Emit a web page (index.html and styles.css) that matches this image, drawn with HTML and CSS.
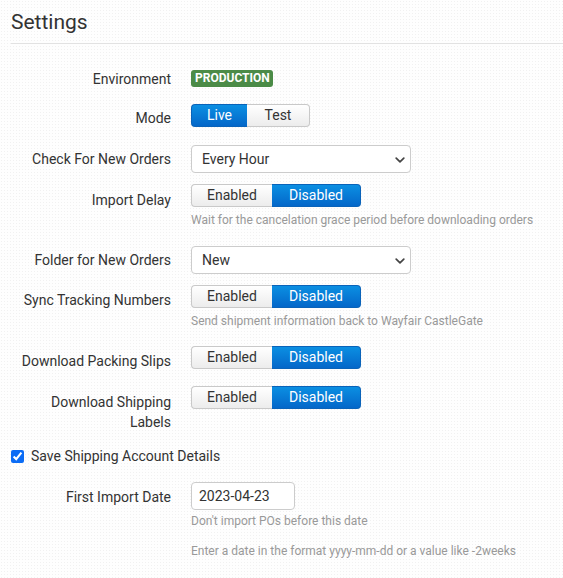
FILE: index.html
```html
<!DOCTYPE html>
<html lang="en">
<head>
<meta charset="utf-8">
<title>Settings</title>
<link rel="stylesheet" href="styles.css">
</head>
<body>
<h1 class="title">Settings</h1>
<form class="form">
  <div class="row row-env">
    <label class="label">Environment</label>
    <div class="control"><span class="badge">PRODUCTION</span></div>
  </div>
  <div class="row row-mode">
    <label class="label pt-4">Mode</label>
    <div class="control">
      <div class="seg">
        <button type="button" class="seg-btn on w-live">Live</button>
        <button type="button" class="seg-btn w-test">Test</button>
      </div>
    </div>
  </div>
  <div class="row row-check">
    <label class="label pt-4">Check For New Orders</label>
    <div class="control">
      <div class="select">
        <span class="select-value">Every Hour</span>
        <svg class="chev" width="10" height="6" viewBox="0 0 10 6"><path d="M1.2 1.2L5 4.8 8.8 1.2" fill="none" stroke="#444" stroke-width="1.7" stroke-linecap="round" stroke-linejoin="round"/></svg>
      </div>
    </div>
  </div>
  <div class="row row-delay">
    <label class="label pt-6">Import Delay</label>
    <div class="control">
      <div class="seg">
        <button type="button" class="seg-btn w-en">Enabled</button>
        <button type="button" class="seg-btn on w-dis">Disabled</button>
      </div>
      <p class="help">Wait for the cancelation grace period before downloading orders</p>
    </div>
  </div>
  <div class="row row-folder">
    <label class="label pt-4">Folder for New Orders</label>
    <div class="control">
      <div class="select">
        <span class="select-value">New</span>
        <svg class="chev" width="10" height="6" viewBox="0 0 10 6"><path d="M1.2 1.2L5 4.8 8.8 1.2" fill="none" stroke="#444" stroke-width="1.7" stroke-linecap="round" stroke-linejoin="round"/></svg>
      </div>
    </div>
  </div>
  <div class="row row-sync">
    <label class="label pt-5">Sync Tracking Numbers</label>
    <div class="control">
      <div class="seg">
        <button type="button" class="seg-btn w-en">Enabled</button>
        <button type="button" class="seg-btn on w-dis">Disabled</button>
      </div>
      <p class="help">Send shipment information back to Wayfair CastleGate</p>
    </div>
  </div>
  <div class="row row-pack">
    <label class="label pt-5">Download Packing Slips</label>
    <div class="control">
      <div class="seg">
        <button type="button" class="seg-btn w-en">Enabled</button>
        <button type="button" class="seg-btn on w-dis">Disabled</button>
      </div>
    </div>
  </div>
  <div class="row row-ship">
    <label class="label pt-6">Download Shipping Labels</label>
    <div class="control">
      <div class="seg">
        <button type="button" class="seg-btn w-en">Enabled</button>
        <button type="button" class="seg-btn on w-dis">Disabled</button>
      </div>
    </div>
  </div>
  <label class="check-row">
    <input type="checkbox" class="check" checked>
    <span>Save Shipping Account Details</span>
  </label>
  <div class="row row-date">
    <label class="label pt-5">First Import Date</label>
    <div class="control">
      <input type="text" class="text-input" value="2023-04-23">
      <p class="help help-tight">Don't import POs before this date</p>
      <p class="help help-gap">Enter a date in the format yyyy-mm-dd or a value like -2weeks</p>
    </div>
  </div>
</form>
</body>
</html>
```
FILE: styles.css
```css
html, body {
  height: 100%;
}
body {
  margin: 0;
  padding: 10px 0 0 11px;
  font-family: Roboto, "Liberation Sans", Arial, sans-serif;
  color: #333;
  background-color: #fefefe;
  background-image: radial-gradient(#f1f1f1 0.7px, transparent 0.9px);
  background-size: 3px 3px;
  box-sizing: border-box;
  overflow: hidden;
}
.title {
  margin: 0;
  font-size: 21px;
  font-weight: 400;
  line-height: 25px;
  padding-bottom: 8px;
  border-bottom: 1px solid #e2e2e2;
  color: #333;
}
.form {
  margin: 0;
}
.row {
  display: grid;
  grid-template-columns: 160px 1fr;
  column-gap: 20px;
  align-items: start;
}
.label {
  font-size: 14px;
  line-height: 20px;
  text-align: right;
  color: #333;
}
.pt-4 { padding-top: 4px; }
.pt-5 { padding-top: 5px; }
.pt-6 { padding-top: 6px; }

.row-env { margin-top: 25px; }
.row-mode { margin-top: 15px; }
.row-check { margin-top: 17px; }
.row-delay { margin-top: 11px; }
.row-folder { margin-top: 17px; }
.row-sync { margin-top: 11px; }
.row-pack { margin-top: 16px; }
.row-ship { margin-top: 15px; }
.row-date { margin-top: 16px; }

.control {
  display: flex;
  flex-direction: column;
  align-items: flex-start;
}
.badge {
  display: inline-block;
  margin-top: 1px;
  height: 17px;
  line-height: 17px;
  padding: 0 4px;
  width: 82px;
  box-sizing: border-box;
  text-align: center;
  font-size: 12px;
  font-weight: 700;
  color: #fff;
  background: #4b8b47;
  border-radius: 3px;
  letter-spacing: 0;
}
.seg {
  display: flex;
  height: 23px;
  border-radius: 4px;
}
.seg-btn {
  margin: 0;
  height: 23px;
  padding: 0;
  font-family: inherit;
  font-size: 14px;
  line-height: 21px;
  color: #333;
  border: 1px solid #c9c9c9;
  background: linear-gradient(#ffffff, #ececec);
  box-sizing: border-box;
  cursor: pointer;
}
.seg-btn:first-child {
  border-radius: 4px 0 0 4px;
  border-right: none;
}
.seg-btn:last-child {
  border-radius: 0 4px 4px 0;
  border-left: none;
}
.seg-btn.on {
  color: #fff;
  border-color: #0a63b9;
  background: linear-gradient(#0b8fe2, #0467c9);
}
.w-live { width: 56px; }
.w-test { width: 63px; }
.w-en { width: 81px; }
.w-dis { width: 89px; }

.select {
  position: relative;
  width: 220px;
  height: 28px;
  box-sizing: border-box;
  border: 1px solid #cccccc;
  border-radius: 4px;
  background: #fff;
  font-size: 14px;
  line-height: 26px;
  padding-left: 10px;
  color: #333;
}
.chev {
  position: absolute;
  right: 5px;
  top: 11px;
}
.help {
  margin: 5px 0 0;
  font-size: 12px;
  line-height: 17px;
  color: #999;
}
.help-tight { margin-top: 3px; }
.help-gap { margin-top: 13px; }

.check-row {
  display: flex;
  align-items: center;
  margin-top: 14px;
  height: 20px;
  font-size: 14px;
  line-height: 20px;
  color: #333;
}
.check {
  margin: 0 7px 0 0;
  width: 13px;
  height: 13px;
  accent-color: #0b6cf5;
}
.text-input {
  width: 104px;
  height: 28px;
  box-sizing: border-box;
  border: 1px solid #cccccc;
  border-radius: 4px;
  background: #fff;
  font-family: inherit;
  font-size: 14px;
  color: #333;
  padding: 0 0 0 7px;
  margin: 0;
}
```
